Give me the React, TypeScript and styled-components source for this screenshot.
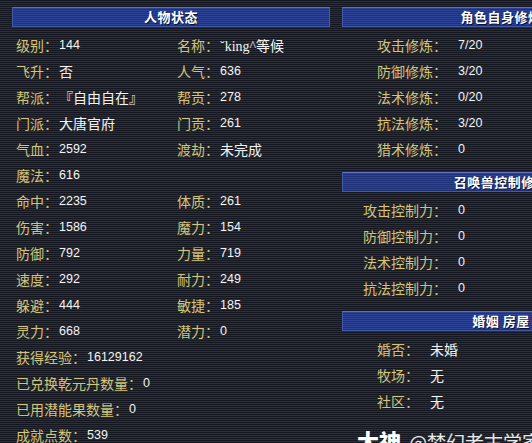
import styled, { createGlobalStyle } from "styled-components";

const GlobalStyle = createGlobalStyle`
  html, body {
    margin: 0;
    padding: 0;
    overflow: hidden;
  }
  body {
    width: 532px;
    height: 443px;
    background: repeating-linear-gradient(
      to bottom,
      #14171f 0px,
      #14171f 1px,
      #2a2f3d 1px,
      #2a2f3d 2px
    );
    font-family: "Noto Sans CJK SC", "Noto Sans", sans-serif;
  }
`;

const Screen = styled.div`
  position: relative;
  width: 532px;
  height: 443px;
  overflow: hidden;
  box-sizing: border-box;
  padding: 7px 0 0 12px;
  display: flex;
  gap: 12px;
  align-items: flex-start;
`;

const Panel = styled.div`
  width: 318px;
  flex: none;
  display: flex;
  flex-direction: column;
`;

const Header = styled.div`
  height: 20px;
  box-sizing: border-box;
  border: 1px solid #4259a8;
  border-top-color: #5a72c4;
  background: repeating-linear-gradient(
    to bottom,
    #2d4395 0px,
    #2d4395 1px,
    #1f3279 1px,
    #1f3279 2px
  );
  color: #ffffff;
  font-weight: bold;
  font-size: 13px;
  line-height: 18px;
  text-align: center;
  text-shadow: 1px 1px 0 #0b1230;
  letter-spacing: 0.5px;
`;

const Rows = styled.div<{ $first?: boolean }>`
  display: flex;
  flex-direction: column;
  padding-top: 5px;
`;

const Row = styled.div`
  display: flex;
  height: 26px;
  align-items: center;
`;

const Cell = styled.div`
  width: 161px;
  flex: none;
  display: flex;
  align-items: center;
  padding-left: 4px;
  box-sizing: border-box;
  white-space: nowrap;
`;

const Label = styled.span`
  color: #d2c47e;
  font-size: 14px;
  font-family: "Noto Sans CJK SC", sans-serif;
`;

const Value = styled.span<{ $num?: boolean }>`
  color: #f2f2f2;
  margin-left: 1px;
  font-size: ${(p) => (p.$num ? "12.5px" : "14px")};
  font-family: ${(p) =>
    p.$num
      ? '"Liberation Sans", sans-serif'
      : '"Liberation Serif", "Noto Sans CJK SC", serif'};
`;

const Section = styled.div<{ $gapTop?: boolean }>`
  display: flex;
  flex-direction: column;
  margin-top: ${(p) => (p.$gapTop ? "10px" : "0")};
`;

const SideRow = styled.div`
  display: flex;
  height: 26px;
  align-items: center;
  white-space: nowrap;
`;

const SideLabel = styled(Label)<{ $w: number }>`
  width: ${(p) => p.$w}px;
  text-align: right;
  flex: none;
`;

const SideValue = styled(Value)`
  margin-left: 11px;
`;

const Watermark = styled.div`
  position: absolute;
  left: 357px;
  top: 424px;
  display: flex;
  align-items: baseline;
  gap: 8px;
  white-space: nowrap;
`;

const MarkBig = styled.span`
  color: #ffffff;
  font-size: 22px;
  font-weight: 900;
  font-family: "Noto Sans CJK SC", sans-serif;
`;

const MarkSmall = styled.span`
  color: #e8e8e8;
  font-size: 19px;
  font-family: "Noto Sans CJK SC", sans-serif;
`;

const isNum = (v: string) => /^[\d/]+$/.test(v);

type Pair = [string, string] | null;

const leftRows: [Pair, Pair][] = [
  [["级别", "144"], ["名称", "ˇking^等候"]],
  [["飞升", "否"], ["人气", "636"]],
  [["帮派", "『自由自在』"], ["帮贡", "278"]],
  [["门派", "大唐官府"], ["门贡", "261"]],
  [["气血", "2592"], ["渡劫", "未完成"]],
  [["魔法", "616"], null],
  [["命中", "2235"], ["体质", "261"]],
  [["伤害", "1586"], ["魔力", "154"]],
  [["防御", "792"], ["力量", "719"]],
  [["速度", "292"], ["耐力", "249"]],
  [["躲避", "444"], ["敏捷", "185"]],
  [["灵力", "668"], ["潜力", "0"]],
  [["获得经验", "16129162"], null],
  [["已兑换乾元丹数量", "0"], null],
  [["已用潜能果数量", "0"], null],
  [["成就点数", "539"], null],
];

const sections: { title: string; w: number; rows: [string, string][] }[] = [
  {
    title: "角色自身修炼",
    w: 105,
    rows: [
      ["攻击修炼", "7/20"],
      ["防御修炼", "3/20"],
      ["法术修炼", "0/20"],
      ["抗法修炼", "3/20"],
      ["猎术修炼", "0"],
    ],
  },
  {
    title: "召唤兽控制修炼",
    w: 105,
    rows: [
      ["攻击控制力", "0"],
      ["防御控制力", "0"],
      ["法术控制力", "0"],
      ["抗法控制力", "0"],
    ],
  },
  {
    title: "婚姻 房屋",
    w: 77,
    rows: [
      ["婚否", "未婚"],
      ["牧场", "无"],
      ["社区", "无"],
    ],
  },
];

const PairCell = ({ pair }: { pair: Pair }) => (
  <Cell>
    {pair && (
      <>
        <Label>{pair[0]}：</Label>
        <Value $num={isNum(pair[1])}>{pair[1]}</Value>
      </>
    )}
  </Cell>
);

export default function App() {
  return (
    <>
      <GlobalStyle />
      <Screen>
        <Panel>
          <Header>人物状态</Header>
          <Rows>
            {leftRows.map(([a, b], i) => (
              <Row key={i}>
                <PairCell pair={a} />
                <PairCell pair={b} />
              </Row>
            ))}
          </Rows>
        </Panel>
        <Panel>
          {sections.map((s, i) => (
            <Section key={s.title} $gapTop={i > 0}>
              <Header>{s.title}</Header>
              <Rows>
                {s.rows.map(([k, v]) => (
                  <SideRow key={k}>
                    <SideLabel $w={s.w}>{k}：</SideLabel>
                    <SideValue $num={isNum(v)}>{v}</SideValue>
                  </SideRow>
                ))}
              </Rows>
            </Section>
          ))}
        </Panel>
        <Watermark>
          <MarkBig>大神</MarkBig>
          <MarkSmall>@梦幻老古学家</MarkSmall>
        </Watermark>
      </Screen>
    </>
  );
}
